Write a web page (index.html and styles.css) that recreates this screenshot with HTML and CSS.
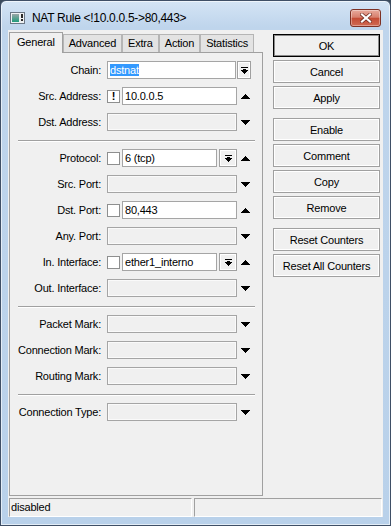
FILE: index.html
```html
<!DOCTYPE html>
<html lang="en">
<head>
    <meta charset="UTF-8">
    <title>NAT Rule</title>
    <link rel="stylesheet" href="styles.css">
</head>
<body>
    <div class="window">
        <div class="titlebar">
            <svg class="title-icon" width="16" height="16" viewBox="0 0 16 16">
                <defs>
                    <linearGradient id="iconFill" x1="0" y1="0" x2="0" y2="1">
                        <stop offset="0" stop-color="#9aa6a8"/>
                        <stop offset="1" stop-color="#1f9a7a"/>
                    </linearGradient>
                </defs>
                <rect x="0.5" y="2.5" width="14" height="11" fill="#eef1f3" stroke="#6b7785"/>
                <rect x="2" y="4" width="7" height="8" fill="url(#iconFill)"/>
                <rect x="11" y="4" width="2" height="4" fill="#2a2a2a"/>
                <rect x="11" y="9" width="2" height="2" fill="#2a2a2a"/>
            </svg>
            <span class="title">NAT Rule &lt;!10.0.0.5-&gt;80,443&gt;</span>
            <div class="close-btn">
                <svg width="12" height="10" viewBox="0 0 12 10">
                    <path d="M2 1.5l8 7M10 1.5l-8 7" stroke="#6e2a1f" stroke-width="3.6" stroke-linecap="square"/>
                    <path d="M2 1.5l8 7M10 1.5l-8 7" stroke="#ffffff" stroke-width="2.2" stroke-linecap="square"/>
                </svg>
            </div>
        </div>

        <div class="client">
            <div class="main">
                <div class="tabs-area">
                    <div class="tabs">
                        <div class="tab active">General</div>
                        <div class="tab">Advanced</div>
                        <div class="tab">Extra</div>
                        <div class="tab">Action</div>
                        <div class="tab">Statistics</div>
                    </div>

                    <div class="panel">
                        <div class="row">
                            <span class="label">Chain:</span>
                            <div class="field wide">
                                <div class="input"><span class="sel">dstnat</span></div>
                                <div class="drop small">
                                    <svg width="7" height="7" viewBox="0 0 7 7"><path d="M0 0h7v1H0zM2 2h3v1h2v1h-1v1h-1v1h-1v1h-1v-1h-1v-1h-1v-1h-1v-1h2z"/></svg>
                                </div>
                            </div>
                        </div>
                        <div class="row">
                            <span class="label">Src. Address:</span>
                            <div class="field">
                                <div class="check">!</div>
                                <div class="input">10.0.0.5</div>
                            </div>
                            <svg class="arrow" width="9" height="5" viewBox="0 0 9 5"><path d="M4 0h1v1h1v1h1v1h1v1h1v1H0V4h1V3h1V2h1V1h1z"/></svg>
                        </div>
                        <div class="row">
                            <span class="label">Dst. Address:</span>
                            <div class="field">
                                <div class="input off"></div>
                            </div>
                            <svg class="arrow" width="9" height="5" viewBox="0 0 9 5"><path d="M0 0h9v1h-1v1h-1v1h-1v1h-1v1h-1v-1h-1v-1h-1v-1h-1v-1h-1z"/></svg>
                        </div>

                        <div class="sep"></div>

                        <div class="row">
                            <span class="label">Protocol:</span>
                            <div class="field">
                                <div class="check"></div>
                                <div class="input">6 (tcp)</div>
                                <div class="drop">
                                    <svg width="7" height="7" viewBox="0 0 7 7"><path d="M0 0h7v1H0zM2 2h3v1h2v1h-1v1h-1v1h-1v1h-1v-1h-1v-1h-1v-1h-1v-1h2z"/></svg>
                                </div>
                            </div>
                            <svg class="arrow" width="9" height="5" viewBox="0 0 9 5"><path d="M4 0h1v1h1v1h1v1h1v1h1v1H0V4h1V3h1V2h1V1h1z"/></svg>
                        </div>
                        <div class="row">
                            <span class="label">Src. Port:</span>
                            <div class="field">
                                <div class="input off"></div>
                            </div>
                            <svg class="arrow" width="9" height="5" viewBox="0 0 9 5"><path d="M0 0h9v1h-1v1h-1v1h-1v1h-1v1h-1v-1h-1v-1h-1v-1h-1v-1h-1z"/></svg>
                        </div>
                        <div class="row">
                            <span class="label">Dst. Port:</span>
                            <div class="field">
                                <div class="check"></div>
                                <div class="input">80,443</div>
                            </div>
                            <svg class="arrow" width="9" height="5" viewBox="0 0 9 5"><path d="M4 0h1v1h1v1h1v1h1v1h1v1H0V4h1V3h1V2h1V1h1z"/></svg>
                        </div>
                        <div class="row">
                            <span class="label">Any. Port:</span>
                            <div class="field">
                                <div class="input off"></div>
                            </div>
                            <svg class="arrow" width="9" height="5" viewBox="0 0 9 5"><path d="M0 0h9v1h-1v1h-1v1h-1v1h-1v1h-1v-1h-1v-1h-1v-1h-1v-1h-1z"/></svg>
                        </div>
                        <div class="row">
                            <span class="label">In. Interface:</span>
                            <div class="field">
                                <div class="check"></div>
                                <div class="input">ether1_interno</div>
                                <div class="drop">
                                    <svg width="7" height="7" viewBox="0 0 7 7"><path d="M0 0h7v1H0zM2 2h3v1h2v1h-1v1h-1v1h-1v1h-1v-1h-1v-1h-1v-1h-1v-1h2z"/></svg>
                                </div>
                            </div>
                            <svg class="arrow" width="9" height="5" viewBox="0 0 9 5"><path d="M4 0h1v1h1v1h1v1h1v1h1v1H0V4h1V3h1V2h1V1h1z"/></svg>
                        </div>
                        <div class="row">
                            <span class="label">Out. Interface:</span>
                            <div class="field">
                                <div class="input off"></div>
                            </div>
                            <svg class="arrow" width="9" height="5" viewBox="0 0 9 5"><path d="M0 0h9v1h-1v1h-1v1h-1v1h-1v1h-1v-1h-1v-1h-1v-1h-1v-1h-1z"/></svg>
                        </div>

                        <div class="sep"></div>

                        <div class="row">
                            <span class="label">Packet Mark:</span>
                            <div class="field">
                                <div class="input off"></div>
                            </div>
                            <svg class="arrow" width="9" height="5" viewBox="0 0 9 5"><path d="M0 0h9v1h-1v1h-1v1h-1v1h-1v1h-1v-1h-1v-1h-1v-1h-1v-1h-1z"/></svg>
                        </div>
                        <div class="row">
                            <span class="label">Connection Mark:</span>
                            <div class="field">
                                <div class="input off"></div>
                            </div>
                            <svg class="arrow" width="9" height="5" viewBox="0 0 9 5"><path d="M0 0h9v1h-1v1h-1v1h-1v1h-1v1h-1v-1h-1v-1h-1v-1h-1v-1h-1z"/></svg>
                        </div>
                        <div class="row">
                            <span class="label">Routing Mark:</span>
                            <div class="field">
                                <div class="input off"></div>
                            </div>
                            <svg class="arrow" width="9" height="5" viewBox="0 0 9 5"><path d="M0 0h9v1h-1v1h-1v1h-1v1h-1v1h-1v-1h-1v-1h-1v-1h-1v-1h-1z"/></svg>
                        </div>

                        <div class="sep"></div>

                        <div class="row">
                            <span class="label">Connection Type:</span>
                            <div class="field">
                                <div class="input off"></div>
                            </div>
                            <svg class="arrow" width="9" height="5" viewBox="0 0 9 5"><path d="M0 0h9v1h-1v1h-1v1h-1v1h-1v1h-1v-1h-1v-1h-1v-1h-1v-1h-1z"/></svg>
                        </div>
                    </div>
                </div>

                <div class="buttons">
                    <div class="btn default">OK</div>
                    <div class="btn">Cancel</div>
                    <div class="btn">Apply</div>
                    <div class="btn group">Enable</div>
                    <div class="btn">Comment</div>
                    <div class="btn">Copy</div>
                    <div class="btn">Remove</div>
                    <div class="btn group">Reset Counters</div>
                    <div class="btn">Reset All Counters</div>
                </div>
            </div>

            <div class="statusbar">
                <div class="pane first">disabled</div>
                <div class="pane"></div>
            </div>
        </div>
    </div>
</body>
</html>
```

FILE: styles.css
```css
* {
    margin: 0;
    padding: 0;
    box-sizing: border-box;
}

body {
    font-family: "Liberation Sans", Arial, sans-serif;
    font-size: 11px;
    letter-spacing: -0.2px;
    color: #000;
    background: #3b4a5c;
    width: 391px;
    height: 526px;
    overflow: hidden;
}

.window {
    width: 391px;
    height: 526px;
    border: 1px solid #3f4f66;
    border-radius: 6px 6px 0 0;
    background: linear-gradient(#d4e4f5, #bfd5ec 26px, #b9d1ea);
    box-shadow: inset 0 0 0 1px rgba(255, 255, 255, 0.6);
    display: flex;
    flex-direction: column;
    padding: 0 7px 8px;
}

/* title bar */
.titlebar {
    height: 29px;
    display: flex;
    align-items: center;
    padding: 5px 2px 0;
}

.title-icon {
    margin-right: 6px;
}

.title {
    font-size: 12px;
    letter-spacing: -0.3px;
}

.close-btn {
    margin-left: auto;
    width: 31px;
    height: 18px;
    border: 1px solid #7d3124;
    border-radius: 3px;
    background: linear-gradient(#e8aa9c 0%, #d7806e 45%, #c44c35 52%, #d06a52 100%);
    box-shadow: inset 0 0 0 1px rgba(255, 255, 255, 0.35);
    display: flex;
    align-items: center;
    justify-content: center;
}

/* client area */
.client {
    flex: 1;
    background: #f0f0f0;
    display: flex;
    flex-direction: column;
    padding: 2px 1px 0 1px;
}

.main {
    display: flex;
    height: 464px;
}

.tabs-area {
    width: 254px;
    display: flex;
    flex-direction: column;
}

.tabs {
    display: flex;
    align-items: flex-end;
    height: 20px;
    position: relative;
    z-index: 1;
}

.tab {
    height: 18px;
    padding: 0 5px;
    border: 1px solid #b5b5b5;
    border-bottom: none;
    background: #e3e3e3;
    line-height: 17px;
    white-space: nowrap;
}

.tab.active {
    height: 21px;
    margin-bottom: -1px;
    padding: 0 7px;
    background: #f0f0f0;
    border-color: #a0a0a0;
    line-height: 19px;
}

.panel {
    flex: 1;
    border: 1px solid #a0a0a0;
    background: #f0f0f0;
    padding-top: 4px;
}

.row {
    display: flex;
    align-items: center;
    height: 26px;
}

.label {
    width: 91px;
    margin-right: 6px;
    text-align: right;
    white-space: nowrap;
}

.field {
    width: 130px;
    display: flex;
    align-items: center;
    gap: 2px;
}

.field.wide {
    width: 144px;
    gap: 1px;
}

.input {
    flex: 1;
    height: 18px;
    border: 1px solid #a5a5a5;
    background: #fff;
    padding: 0 2px;
    line-height: 16px;
    white-space: nowrap;
    overflow: hidden;
}

.input.off {
    background: #f0f0f0;
    box-shadow: inset 0 0 0 1px #fafafa;
}

.sel {
    background: #3399ff;
    color: #fff;
}

.check {
    width: 13px;
    height: 13px;
    border: 1px solid #8e8f8f;
    background: #fff;
    font-weight: bold;
    font-size: 11px;
    line-height: 11px;
    text-align: center;
}

.drop {
    width: 18px;
    height: 18px;
    border: 1px solid #a0a0a0;
    background: #f0f0f0;
    box-shadow: inset 0 0 0 1px #fff;
    display: flex;
    align-items: center;
    justify-content: center;
}

.drop.small {
    width: 14px;
}

.arrow {
    margin-left: 4px;
}

.sep {
    margin: 5px 7px 3px 8px;
    border-top: 1px solid #a0a0a0;
    border-bottom: 1px solid #fff;
}

/* right column of buttons */
.buttons {
    width: 107px;
    margin-left: 10px;
    padding-top: 2px;
    display: flex;
    flex-direction: column;
    gap: 3px;
}

.btn {
    height: 23px;
    border: 1px solid #a0a0a0;
    background: #f0f0f0;
    box-shadow: inset 0 0 0 1px #fff;
    display: flex;
    align-items: center;
    justify-content: center;
    white-space: nowrap;
}

.btn.default {
    border-color: #000;
    box-shadow: inset 0 0 0 1px #8a8a8a;
}

.btn.group {
    margin-top: 6px;
}

/* status bar */
.statusbar {
    display: flex;
    gap: 2px;
    margin-top: 2px;
    height: 19px;
}

.pane {
    flex: 1;
    border-top: 1px solid #a0a0a0;
    border-left: 1px solid #a0a0a0;
    border-bottom: 1px solid #fff;
    border-right: 1px solid #fff;
    padding-left: 1px;
    line-height: 17px;
}

.pane.first {
    flex: none;
    width: 183px;
}
```
